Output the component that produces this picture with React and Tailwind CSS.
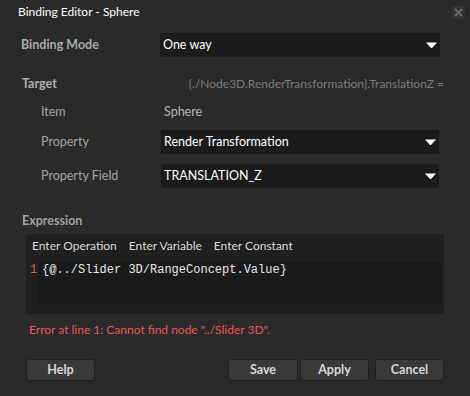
import React from "react"

function Caret() {
  return (
    <svg width="11" height="7" viewBox="0 0 11 7" className="shrink-0">
      <path d="M0 0.5 H11 L6 6 H5 Z" fill="#ffffff" />
    </svg>
  )
}

function Select({ value }) {
  return (
    <div className="flex h-6 items-center justify-between bg-[#1b1b1b] pl-[3px] pr-[3px] text-[12.5px] text-white">
      <span>{value}</span>
      <Caret />
    </div>
  )
}

function Button({ children, className = "" }) {
  return (
    <button
      className={
        "h-[22px] w-[69px] rounded-[3px] border border-[#1f1f1f] bg-[#393939] text-[12.5px] font-bold text-[#d8d8d8] " +
        className
      }
    >
      {children}
    </button>
  )
}

export default function App() {
  return (
    <div
      className="h-[396px] w-[470px] overflow-hidden bg-[#2a2a2a] text-[12px] leading-[18px]"
      style={{ fontFamily: 'Lato, "Noto Sans", sans-serif' }}
    >
      {/* Title bar */}
      <div className="flex h-[24px] items-center justify-between pl-[18px] pr-[5px]">
        <span className="text-[12px] text-white">Binding Editor - Sphere</span>
        <div className="flex h-[13px] w-[13px] items-center justify-center bg-[#333333]">
          <svg width="9" height="9" viewBox="0 0 9 9">
            <path d="M1 1 L8 8 M8 1 L1 8" stroke="#6a6a6a" strokeWidth="2" />
          </svg>
        </div>
      </div>

      <div className="px-[21px] pt-[9px]">
        {/* Binding mode */}
        <div className="grid grid-cols-[139px_1fr] items-center pr-[9px]">
          <span className="text-[12.5px] font-bold text-[#a9a9a9]">Binding Mode</span>
          <Select value="One way" />
        </div>

        {/* Target */}
        <div className="mt-[18px] flex items-center justify-between pl-px pr-[5px]">
          <span className="text-[12.5px] font-bold text-[#b0b0b0]">Target</span>
          <span className="text-[#7c7c7c]">{"{./Node3D.RenderTransformation}.TranslationZ ="}</span>
        </div>

        <div className="mt-[7px] pl-[20px] pr-[10px] text-[12.5px] text-[#a5a5a5]">
          <div className="grid h-6 grid-cols-[119px_1fr] items-center">
            <span>Item</span>
            <span className="pl-[4px] text-[#b8b8b8]">Sphere</span>
          </div>
          <div className="mt-[6px] grid grid-cols-[120px_1fr] items-center">
            <span>Property</span>
            <Select value="Render Transformation" />
          </div>
          <div className="mt-[10px] grid grid-cols-[120px_1fr] items-center">
            <span>Property Field</span>
            <Select value="TRANSLATION_Z" />
          </div>
        </div>

        {/* Expression */}
        <div className="mt-[24px] pl-px text-[12.5px] font-bold text-[#a5a5a5]">Expression</div>
        <div className="mt-[4px] ml-[5px] mr-[5px] h-[80px] bg-[#1f1f1f] pt-[2px]">
          <div className="flex h-[20px] items-center gap-[12px] pl-[6px] text-[#dcdcdc]">
            <span>Enter Operation</span>
            <span>Enter Variable</span>
            <span>Enter Constant</span>
          </div>
          <div className="mt-[6px] flex h-[43px] pr-[3px]">
            <span
              className="w-[12px] pl-[4px] text-[12px] leading-[16px] text-[#e05a5a]"
              style={{ fontFamily: '"Liberation Mono", monospace' }}
            >
              1
            </span>
            <div
              className="flex-1 bg-[#1a1a1a] pl-[4px] text-[12px] leading-[16px] text-[#e8e8e8]"
              style={{ fontFamily: '"Liberation Mono", monospace' }}
            >
              {"{@../Slider 3D/RangeConcept.Value}"}
            </div>
          </div>
        </div>

        <div className="mt-[7px] pl-[8px] text-[12px] text-[#ee5656]">
          Error at line 1: Cannot find node "../Slider 3D".
        </div>

        {/* Buttons */}
        <div className="mt-[20px] flex items-center pl-[5px] pr-[5px]">
          <Button>Help</Button>
          <div className="flex-1" />
          <Button className="w-[70px]">Save</Button>
          <Button className="ml-[2px]">Apply</Button>
          <Button className="ml-[6px]">Cancel</Button>
        </div>
      </div>
    </div>
  )
}
